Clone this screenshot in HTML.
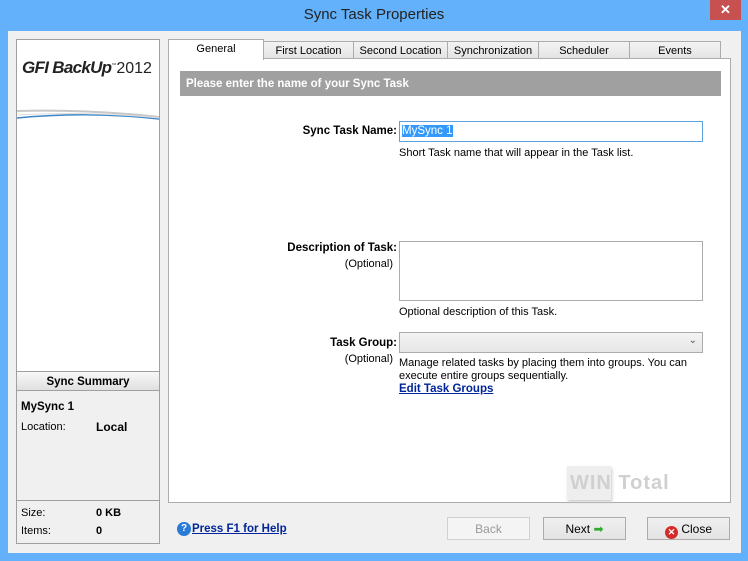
<!DOCTYPE html>
<html><head><style>
*{margin:0;padding:0;box-sizing:border-box}
body{width:748px;height:561px;background:#63b1fa;font-family:"Liberation Sans",sans-serif;font-size:11px;color:#000;position:relative;overflow:hidden}
.a{position:absolute}
.title{left:0;top:6px;width:748px;text-align:center;font-size:15px;color:#222}
.client{left:8px;top:31px;width:733px;height:522px;background:#f0f0f0}
.tab{top:41px;height:18px;border:1px solid #acacac;border-bottom:none;background:linear-gradient(#f3f3f3,#e3e3e3);text-align:center;line-height:19px}
.b{font-weight:bold}
.btn{top:517px;width:83px;height:23px;border:1px solid #acacac;background:linear-gradient(#f0f0f0,#e3e3e3);text-align:center;line-height:23px;font-size:12px}
.r{text-align:right}
</style></head><body>
<div class="a title">Sync Task Properties</div>
<div class="a" style="left:710px;top:0;width:31px;height:20px;background:#c75050;color:#fff;text-align:center;font-size:13px;line-height:20px;font-weight:bold">✕</div>
<div class="a client"></div>
<!-- left panel -->
<div class="a" style="left:16px;top:39px;width:144px;height:505px;border:1px solid #a0a0a0;background:#f0f0f0"></div>
<div class="a" style="left:17px;top:40px;width:142px;height:331px;background:#fff"></div>
<div class="a" style="left:22px;top:58px;font-size:17px;font-style:italic;font-weight:bold;color:#222;letter-spacing:-0.7px;white-space:nowrap">GFI BackUp<span style="font-weight:normal;font-style:normal;font-size:16px;letter-spacing:0"><sup style="font-size:5px">™</sup>2012</span></div>
<svg class="a" style="left:17px;top:105px" width="142" height="20"><path d="M0 6 Q70 4 142 12" stroke="#c8c8c8" stroke-width="2" fill="none"/><path d="M0 13 Q70 6 142 14" stroke="#3a86c8" stroke-width="1.5" fill="none"/><path d="M0 10 Q70 6 142 13" stroke="#ddd" stroke-width="1" fill="none"/></svg>
<div class="a b" style="left:17px;top:371px;width:142px;height:20px;border-top:1px solid #a0a0a0;border-bottom:1px solid #a0a0a0;background:linear-gradient(#f8f8f8,#e0e0e0);text-align:center;line-height:20px;font-size:11.5px">Sync Summary</div>
<div class="a b" style="left:21px;top:401px;font-size:11.5px">MySync 1</div>
<div class="a" style="left:21px;top:421px">Location:</div>
<div class="a b" style="left:96px;top:420px;font-size:12px">Local</div>
<div class="a" style="left:17px;top:500px;width:142px;border-top:1px solid #a0a0a0"></div>
<div class="a" style="left:21px;top:507px">Size:</div><div class="a b" style="left:96px;top:507px">0 KB</div>
<div class="a" style="left:21px;top:525px">Items:</div><div class="a b" style="left:96px;top:525px">0</div>
<!-- tabs -->
<div class="a tab" style="left:263px;width:91px">First Location</div>
<div class="a tab" style="left:353px;width:95px">Second Location</div>
<div class="a tab" style="left:447px;width:92px">Synchronization</div>
<div class="a tab" style="left:538px;width:92px">Scheduler</div>
<div class="a tab" style="left:629px;width:92px">Events</div>
<div class="a" style="left:168px;top:58px;width:563px;height:445px;border:1px solid #acacac;background:#fff"></div>
<div class="a" style="left:168px;top:39px;width:96px;height:21px;border:1px solid #acacac;border-bottom:none;background:#fff;text-align:center;line-height:19px">General</div>
<div class="a b" style="left:180px;top:71px;width:541px;height:25px;background:#a0a0a0;color:#fff;line-height:26px;padding-left:6px;font-size:11.5px">Please enter the name of your Sync Task</div>
<!-- form -->
<div class="a b r" style="left:200px;top:125px;width:197px;font-size:11.5px">Sync Task Name:</div>
<div class="a" style="left:399px;top:121px;width:304px;height:21px;border:1px solid #5ea3e0;padding:3px 2px"><span style="background:#3399ff;color:#fff;font-size:11.5px">MySync 1</span></div>
<div class="a" style="left:399px;top:147px">Short Task name that will appear in the Task list.</div>
<div class="a b r" style="left:200px;top:242px;width:197px;font-size:11.5px">Description of Task:</div>
<div class="a r" style="left:200px;top:258px;width:193px">(Optional)</div>
<div class="a" style="left:399px;top:241px;width:304px;height:60px;border:1px solid #acacac"></div>
<div class="a" style="left:399px;top:306px">Optional description of this Task.</div>
<div class="a b r" style="left:200px;top:337px;width:197px;font-size:11.5px">Task Group:</div>
<div class="a r" style="left:200px;top:353px;width:193px">(Optional)</div>
<div class="a" style="left:399px;top:332px;width:304px;height:21px;border:1px solid #acacac;background:linear-gradient(#f3f3f3,#e6e6e6)"><span style="position:absolute;right:5px;top:2px;color:#555;font-size:10px">⌄</span></div>
<div class="a" style="left:399px;top:357px;line-height:13px">Manage related tasks by placing them into groups. You can<br>execute entire groups sequentially.</div>
<div class="a b" style="left:399px;top:383px;color:#00259a;text-decoration:underline;font-size:11.5px">Edit Task Groups</div>
<div class="a" style="left:567px;top:466px;width:44px;height:34px;background:#eee;box-shadow:1px 2px 3px #ccc"></div>
<div class="a" style="left:570px;top:472px;font-size:20px;font-weight:bold;color:#d0d0d0;letter-spacing:1px">WIN Total</div>
<!-- bottom -->
<div class="a" style="left:177px;top:522px;width:14px;height:14px;border-radius:50%;background:#2a7ad8;color:#fff;font-size:10px;text-align:center;line-height:14px;font-weight:bold">?</div>
<div class="a b" style="left:192px;top:523px;color:#00259a;text-decoration:underline;font-size:11.5px">Press F1 for Help</div>
<div class="a btn" style="left:447px;color:#999;border-color:#d0d0d0;background:#f4f4f4">Back</div>
<div class="a btn" style="left:543px">Next <span style="color:#3a3;font-size:12px">➡</span></div>
<div class="a btn" style="left:647px"><span style="display:inline-block;width:13px;height:13px;border-radius:50%;background:#d52a2a;color:#fff;font-size:9px;line-height:13px;vertical-align:-2px;font-weight:bold">✕</span> Close</div>
</body></html>
